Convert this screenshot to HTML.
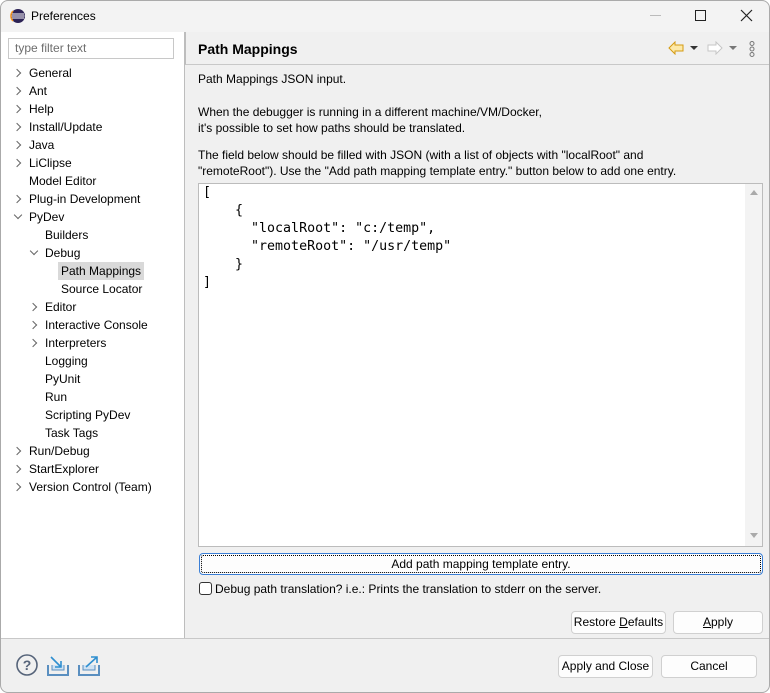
<!DOCTYPE html>
<html><head><style>
*{margin:0;padding:0;box-sizing:border-box}
body{width:770px;height:693px;background:#fff;font-family:"Liberation Sans",sans-serif;font-size:12px;color:#000;position:relative;overflow:hidden}
.a{position:absolute;white-space:nowrap}
#win{position:absolute;left:0;top:0;width:770px;height:693px;border-radius:8px;background:#f0f0f0;overflow:hidden}
.tree div{position:absolute;height:18px;line-height:18px}
.chev{position:absolute;width:6px;height:6px;border-right:1.3px solid #666;border-bottom:1.3px solid #666}
.r{transform:rotate(-45deg)}
.d{transform:rotate(45deg)}
.btn{position:absolute;background:#fdfdfd;border:1px solid #d0d0d0;border-radius:4px;text-align:center;line-height:21px;font-size:12px}
</style></head><body>
<div id="win">
<div class="a" style="left:0;top:0;width:770px;height:32px;background:#f3f3f3"></div>
<svg class="a" style="left:10px;top:8px" width="16" height="16" viewBox="0 0 16 16"><circle cx="8" cy="8" r="7" fill="#2c2255"/><path d="M2 6h12M1.5 8h13M2 10h12" stroke="#fff" stroke-width="1"/><path d="M3 3a7 7 0 0 0 0 10" stroke="#f7941e" stroke-width="1.5" fill="none"/></svg>
<div class="a" style="left:31px;top:9px;font-size:12px">Preferences</div>
<div class="a" style="left:650px;top:15px;width:11px;height:1px;background:#bbb"></div>
<div class="a" style="left:695px;top:10px;width:11px;height:11px;border:1.2px solid #222"></div>
<svg class="a" style="left:740px;top:9px" width="13" height="13"><path d="M1 1L12 12M12 1L1 12" stroke="#222" stroke-width="1.2"/></svg>
<div class="a" style="left:0;top:32px;width:185px;height:606px;background:#fff;border-right:1px solid #bdbdbd"></div>
<div class="a" style="left:8px;top:38px;width:166px;height:21px;border:1px solid #c8c8c8;background:#fff;color:#6d6d6d;padding-left:6px;line-height:19px">type filter text</div>
<div class="tree">
<div style="left:29px;top:64px">General</div>
<div style="left:29px;top:82px">Ant</div>
<div style="left:29px;top:100px">Help</div>
<div style="left:29px;top:118px">Install/Update</div>
<div style="left:29px;top:136px">Java</div>
<div style="left:29px;top:154px">LiClipse</div>
<div style="left:29px;top:172px">Model Editor</div>
<div style="left:29px;top:190px">Plug-in Development</div>
<div style="left:29px;top:208px">PyDev</div>
<div style="left:45px;top:226px">Builders</div>
<div style="left:45px;top:244px">Debug</div>
<div style="left:58px;top:262px;background:#d9d9d9;padding:0 3px">Path Mappings</div>
<div style="left:61px;top:280px">Source Locator</div>
<div style="left:45px;top:298px">Editor</div>
<div style="left:45px;top:316px">Interactive Console</div>
<div style="left:45px;top:334px">Interpreters</div>
<div style="left:45px;top:352px">Logging</div>
<div style="left:45px;top:370px">PyUnit</div>
<div style="left:45px;top:388px">Run</div>
<div style="left:45px;top:406px">Scripting PyDev</div>
<div style="left:45px;top:424px">Task Tags</div>
<div style="left:29px;top:442px">Run/Debug</div>
<div style="left:29px;top:460px">StartExplorer</div>
<div style="left:29px;top:478px">Version Control (Team)</div>
</div>
<div class="chev r" style="left:14px;top:70px"></div>
<div class="chev r" style="left:14px;top:88px"></div>
<div class="chev r" style="left:14px;top:106px"></div>
<div class="chev r" style="left:14px;top:124px"></div>
<div class="chev r" style="left:14px;top:142px"></div>
<div class="chev r" style="left:14px;top:160px"></div>
<div class="chev r" style="left:14px;top:196px"></div>
<div class="chev d" style="left:15px;top:212px"></div>
<div class="chev d" style="left:31px;top:248px"></div>
<div class="chev r" style="left:30px;top:304px"></div>
<div class="chev r" style="left:30px;top:322px"></div>
<div class="chev r" style="left:30px;top:340px"></div>
<div class="chev r" style="left:14px;top:448px"></div>
<div class="chev r" style="left:14px;top:466px"></div>
<div class="chev r" style="left:14px;top:484px"></div>
<div class="a" style="left:185px;top:32px;width:585px;height:33px;background:#f0f0f0;border-bottom:1px solid #c8c8c8;border-left:1px solid #bdbdbd"></div>
<div class="a" style="left:198px;top:41px;font-size:14px;font-weight:bold">Path Mappings</div>
<svg class="a" style="left:668px;top:41px" width="16" height="14"><path d="M1 7L7 1V4H15V10H7V13Z" fill="#fde9a8" stroke="#d49a12" stroke-width="1"/></svg>
<svg class="a" style="left:690px;top:46px" width="8" height="5"><path d="M0 0H8L4 4Z" fill="#333"/></svg>
<svg class="a" style="left:707px;top:41px" width="16" height="14"><path d="M15 7L9 1V4H1V10H9V13Z" fill="#fff" stroke="#c6c6c6" stroke-width="1"/></svg>
<svg class="a" style="left:729px;top:46px" width="8" height="5"><path d="M0 0H8L4 4Z" fill="#777"/></svg>
<svg class="a" style="left:748px;top:41px" width="8" height="16"><circle cx="4" cy="2.5" r="2" fill="none" stroke="#777"/><circle cx="4" cy="8" r="2" fill="none" stroke="#777"/><circle cx="4" cy="13.5" r="2" fill="none" stroke="#777"/></svg>
<div class="a" style="left:198px;top:72px">Path Mappings JSON input.</div>
<div class="a" style="left:198px;top:104px;line-height:16px">When the debugger is running in a different machine/VM/Docker,<br>it's possible to set how paths should be translated.</div>
<div class="a" style="left:198px;top:147px;line-height:16px">The field below should be filled with JSON (with a list of objects with "localRoot" and<br>"remoteRoot"). Use the "Add path mapping template entry." button below to add one entry.</div>
<div class="a" style="left:198px;top:183px;width:565px;height:364px;background:#fff;border:1px solid #bcbcbc"></div>
<div class="a" style="left:203px;top:184px;font-family:'DejaVu Sans Mono','Liberation Mono',monospace;font-size:13.3px;line-height:18px;white-space:pre">[
    {
      "localRoot": "c:/temp",
      "remoteRoot": "/usr/temp"
    }
]</div>
<div class="a" style="left:745px;top:184px;width:17px;height:362px;background:#f3f3f3"></div>
<svg class="a" style="left:750px;top:190px" width="8" height="5"><path d="M0 5H8L4 0Z" fill="#aaa"/></svg>
<svg class="a" style="left:750px;top:533px" width="8" height="5"><path d="M0 0H8L4 5Z" fill="#aaa"/></svg>
<div class="btn" style="left:199px;top:553px;width:564px;height:22px;border:1px solid #3b7fd6;outline:1px dotted #000;outline-offset:-3px;line-height:20px">Add path mapping template entry.</div>
<div class="a" style="left:199px;top:582px;width:13px;height:13px;border:1px solid #333;border-radius:3px;background:#fff"></div>
<div class="a" style="left:215px;top:582px">Debug path translation? i.e.: Prints the translation to stderr on the server.</div>
<div class="btn" style="left:571px;top:611px;width:95px;height:23px">Restore <u>D</u>efaults</div>
<div class="btn" style="left:673px;top:611px;width:90px;height:23px"><u>A</u>pply</div>
<div class="a" style="left:0;top:638px;width:770px;height:1px;background:#c8c8c8"></div>
<svg class="a" style="left:16px;top:654px" width="22" height="22"><circle cx="11" cy="11" r="10" fill="none" stroke="#56647a" stroke-width="1.6"/><text x="11" y="16" text-anchor="middle" font-family="Liberation Sans" font-weight="bold" font-size="14" fill="#56647a">?</text></svg>
<svg class="a" style="left:46px;top:655px" width="24" height="22"><path d="M2 10V20H22V10" fill="none" stroke="#5a8fc0" stroke-width="2"/><path d="M6 10V15H18V10" fill="#cfe2f3" stroke="#5a8fc0"/><path d="M5 2L15 12M15 6V12H9" fill="none" stroke="#2f8fd0" stroke-width="1.6"/></svg>
<svg class="a" style="left:77px;top:655px" width="24" height="22"><path d="M2 10V20H22V10" fill="none" stroke="#5a8fc0" stroke-width="2"/><path d="M6 10V15H18V10" fill="#cfe2f3" stroke="#5a8fc0"/><path d="M9 12L20 2M14 2H20V8" fill="none" stroke="#2f8fd0" stroke-width="1.6"/></svg>
<div class="btn" style="left:558px;top:655px;width:95px;height:23px">Apply and Close</div>
<div class="btn" style="left:661px;top:655px;width:96px;height:23px">Cancel</div>
</div>
<div class="a" style="left:0;top:0;width:770px;height:693px;border:1px solid #aaa;border-radius:8px;pointer-events:none"></div>
</body></html>
